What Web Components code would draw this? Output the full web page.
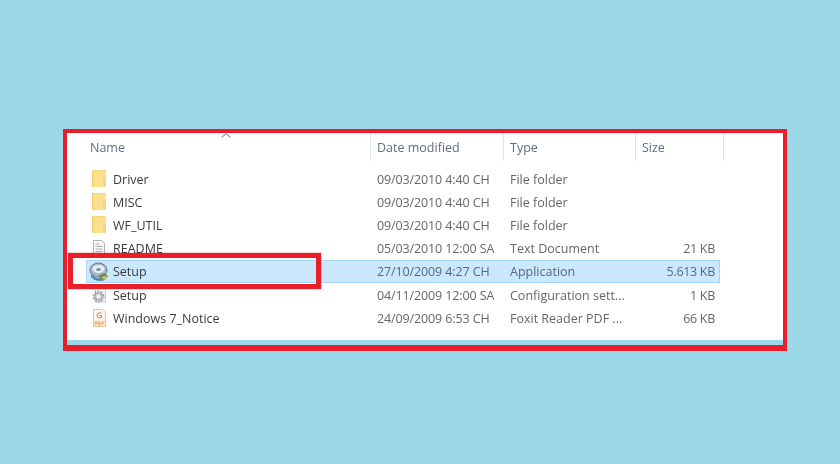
<!DOCTYPE html>
<html>
<head>
<meta charset="utf-8">
<title>Setup folder</title>
<style>
  html, body { margin: 0; height: 100%; background: #9ad8ea; }
  body { font-family: "Open Sans", "Noto Sans", sans-serif; }
</style>
</head>
<body>
<explorer-pane>
  <file-header slot="header"></file-header>
  <file-row icon="folder" name="Driver" date="09/03/2010 4:40 CH" type="File folder"></file-row>
  <file-row icon="folder" name="MISC" date="09/03/2010 4:40 CH" type="File folder"></file-row>
  <file-row icon="folder" name="WF_UTIL" date="09/03/2010 4:40 CH" type="File folder"></file-row>
  <file-row icon="text" name="README" date="05/03/2010 12:00 SA" type="Text Document" size="21 KB"></file-row>
  <file-row icon="setup" name="Setup" date="27/10/2009 4:27 CH" type="Application" size="5.613 KB" selected></file-row>
  <file-row icon="config" name="Setup" date="04/11/2009 12:00 SA" type="Configuration sett..." size="1 KB"></file-row>
  <file-row icon="pdf" name="Windows 7_Notice" date="24/09/2009 6:53 CH" type="Foxit Reader PDF ..." size="66 KB"></file-row>
</explorer-pane>

<script>
const ICONS = {
    folder: `<svg width="18" height="18" viewBox="0 0 18 18">
        <path d="M1 0h14v17H1z" fill="#fce08e"/>
        <path d="M1 0h1.200v17H1z" fill="#f4cd6a"/>
        <path d="M1 0h14v.8H1z" fill="#f6d67c"/>
        <path d="M12 8.500h3V17h-3z" fill="#ecd58e"/>
    </svg>`,
    text: `<svg width="18" height="18" viewBox="0 0 18 18">
        <path d="M2.500.5h8l3 3v13h-11z" fill="#fbfbfb" stroke="#aeb1b4"/>
        <path d="M4.500 4h4M4.500 6.500h7M4.500 9h7M4.500 11.500h7M4.500 14h7" stroke="#a2a6aa"/>
    </svg>`,
    setup: `<svg width="20" height="20" viewBox="0 0 20 20" style="margin-left:-2px">
        <ellipse cx="9.500" cy="8" rx="8.500" ry="7" fill="#a7b9c5" stroke="#62798a"/>
        <ellipse cx="9.500" cy="7" rx="6" ry="4" fill="#e4eef3"/>
        <ellipse cx="9.500" cy="7.500" rx="2.400" ry="1.500" fill="#6f96b1"/>
        <path d="M2 11c2 5 9 7 15 4l-1 3c-5 2-11 1-14-3z" fill="#4a86b8"/>
        <path d="M10 13l6-2 3 3-3 4-5 0z" fill="#6f8f55"/>
        <path d="M13 15l4-1 1 2-3 2z" fill="#d9c368"/>
    </svg>`,
    config: `<svg width="18" height="18" viewBox="0 0 18 18">
        <path d="M4.500 1.500h8l2 2V16h-10z" fill="#f8f8f8" stroke="#c7c9cb"/>
        <circle cx="7.500" cy="10.500" r="5" fill="none" stroke="#a3a6aa" stroke-width="2" stroke-dasharray="2 1.100"/>
        <circle cx="7.500" cy="10.500" r="3.600" fill="#d4d6d8" stroke="#9a9da1"/>
        <circle cx="7.500" cy="10.500" r="1.400" fill="#f6f6f6"/>
    </svg>`,
    pdf: `<svg width="18" height="18" viewBox="0 0 18 18">
        <path d="M2.500.5h9l3 3v14h-12z" fill="#fdf6ee" stroke="#efc197"/>
        <path d="M10.500 4.500a2.500 2.500 0 1 0 0 3.500V6.500h-2" fill="none" stroke="#e39058" stroke-width="1.200"/>
        <path d="M3 11.500h11v5.500H3z" fill="#fae5d0"/>
        <path d="M4.500 13v3M4.500 13H6v1.300H4.500M7.500 13v3h1.200l.6-1.500-.6-1.500zM11 16v-3h2M11 14.500h1.500" fill="none" stroke="#dd9260" stroke-width=".7"/>
    </svg>`
}

class ExplorerPane extends HTMLElement {
    constructor() {
        super()
        this.attachShadow({ mode: "open" })
        this.shadowRoot.innerHTML = `
            <style>
                :host {
                    display: block;
                    box-sizing: border-box;
                    width: 724px;
                    height: 222px;
                    position: relative;
                    top: 129px;
                    left: 63px;
                    border: 4px solid #e81f2b;
                    border-bottom-width: 6px;
                    background: #9ad8ea;
                }
                .inner {
                    height: 207px;
                    background: #fff;
                    display: flex;
                    flex-direction: column;
                    filter: blur(.5px);
                }
                .rows {
                    display: flex;
                    flex-direction: column;
                    margin: 6.500px 0 0 19px;
                    width: 634px;
                }
                .mark {
                    position: absolute;
                    box-sizing: border-box;
                    left: 1px;
                    top: 120px;
                    width: 253px;
                    height: 36px;
                    border: 5px solid #e81f2b;
                    box-shadow: 0 0 1px #b0161c;
                }
            </style>
            <div class="inner">
                <slot name="header"></slot>
                <div class="rows"><slot></slot></div>
            </div>
            <div class="mark"></div>
        `
    }
}

class FileHeader extends HTMLElement {
    constructor() {
        super()
        this.attachShadow({ mode: "open" })
        this.shadowRoot.innerHTML = `
            <style>
                :host {
                    display: grid;
                    grid-template-columns: 304px 133px 132px 88px;
                    height: 28px;
                    font-size: 12.500px;
                    color: #5f6e80;
                    position: relative;
                }
                div {
                    box-sizing: border-box;
                    border-right: 1px solid #e2e5ea;
                    padding: 6px 0 0 6px;
                    line-height: 17px;
                }
                div.name { padding-left: 23px; }
                svg { position: absolute; left: 154px; top: 0; }
            </style>
            <div class="name">Name</div><div>Date modified</div><div>Type</div><div>Size</div>
            <svg width="10" height="5" viewBox="0 0 10 5"><path d="M.5 4.500 5 .8l4.500 3.700" fill="none" stroke="#9aa0a6" stroke-width="1.100"/></svg>
        `
    }
}

class FileRow extends HTMLElement {
    constructor() {
        super()
        this.attachShadow({ mode: "open" })
    }

    connectedCallback() {
        const a = n => this.getAttribute(n) || ""
        this.shadowRoot.innerHTML = `
            <style>
                :host {
                    display: grid;
                    grid-template-columns: 27px 264px 133px 1fr;
                    align-items: center;
                    height: 23.200px;
                    box-sizing: border-box;
                    padding-right: 5px;
                    font-size: 12.500px;
                    color: #666;
                    white-space: nowrap;
                }
                :host([selected]) {
                    background: #cce8ff;
                    box-shadow: inset 0 0 0 1px #a6d6fb;
                    color: #566a7a;
                }
                .icon { display: flex; height: 20px; align-items: center; padding-left: 5px; }
                .name { color: #3a3a3a; }
                .date { letter-spacing: -.12px; }
                .type { display: flex; justify-content: space-between; }
                .size { letter-spacing: -.3px; }
            </style>
            <div class="icon">${ICONS[a("icon")]}</div>
            <div class="name">${a("name")}</div>
            <div class="date">${a("date")}</div>
            <div class="type"><span>${a("type")}</span><span class="size">${a("size")}</span></div>
        `
    }
}

customElements.define('explorer-pane', ExplorerPane)
customElements.define('file-header', FileHeader)
customElements.define('file-row', FileRow)
</script>
</body>
</html>
